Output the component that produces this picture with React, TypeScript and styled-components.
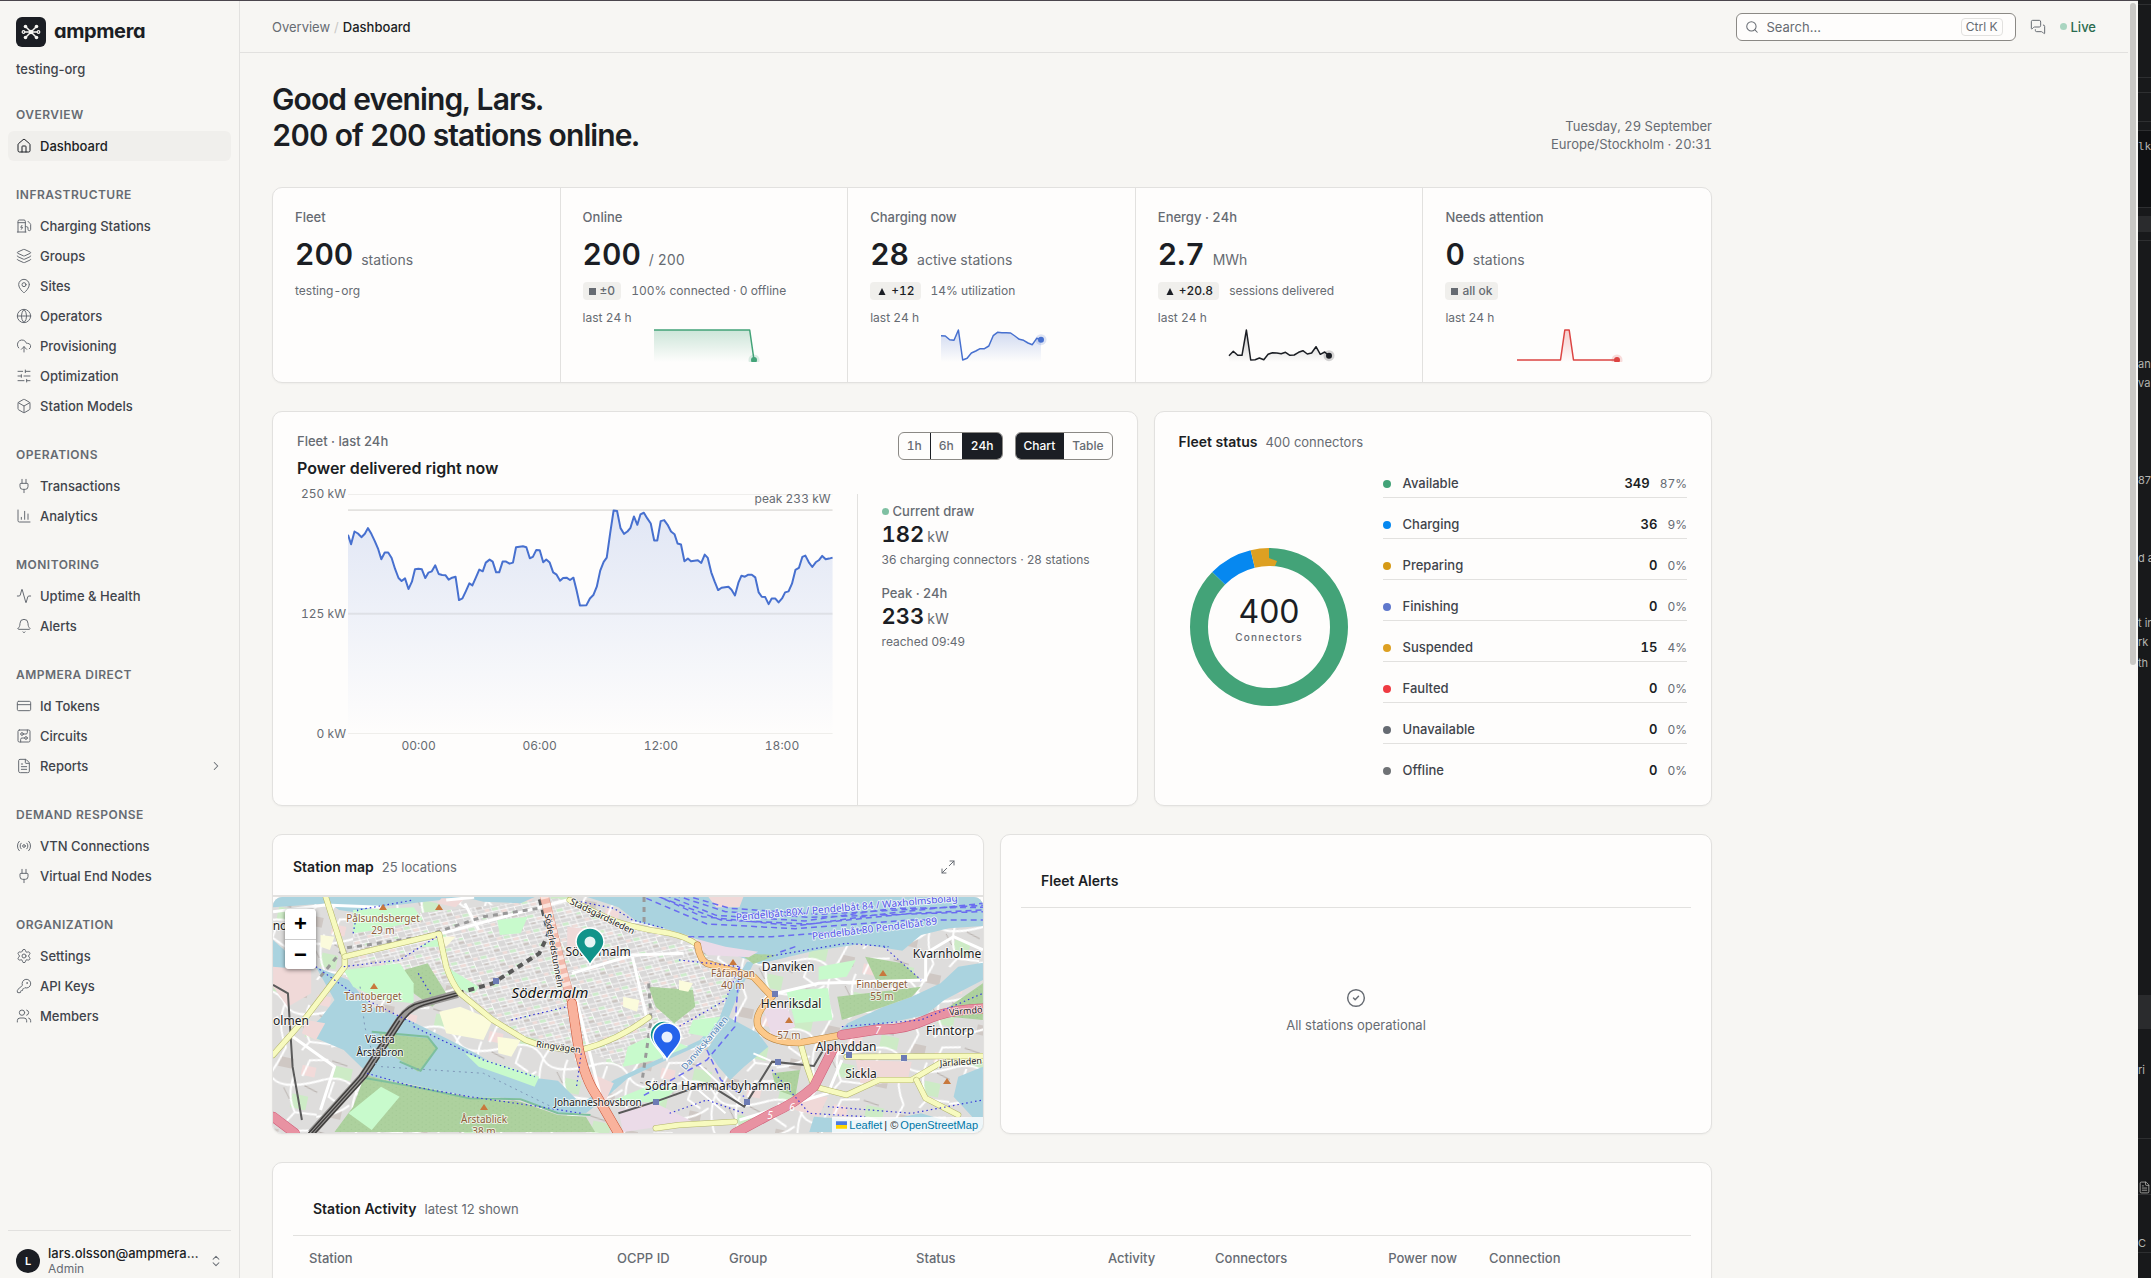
import React from "react";
import styled, { createGlobalStyle } from "styled-components";
import {
  Activity, Bell, Box, ChartColumn, ChevronRight, ChevronsUpDown, CircleCheck, CircuitBoard,
  CloudUpload, CreditCard, EvCharger, FileText, Globe, House, KeyRound, Layers, MapPin,
  Maximize2, MessagesSquare, Plug, Radio, Search, Settings, SlidersHorizontal, Users,
} from "lucide-react";

const c = {
  page: "#f7f6f3", card: "#fefdfc", line: "#e2e1df", strong: "#8b8985", soft: "#f0efec",
  ink: "#1b1e24", body: "#3f444b", muted: "#666b72",
  green: "#43a378", blue: "#4770cf", red: "#dc4442",
};

const Global = createGlobalStyle`
  *, *::before, *::after { box-sizing: border-box; }
  body { margin: 0; background: ${c.page}; overflow: hidden; }
  body, button, input { font-family: Inter, "Liberation Sans", sans-serif; }
  h1, h2, p, ul { margin: 0; padding: 0; }
  ul { list-style: none; }
  a { color: inherit; text-decoration: none; }
`;

const Desktop = styled.div`
  display: flex; height: 100vh; overflow: hidden;
  font-size: 13px; line-height: 18px; color: ${c.ink};
`;
const AppWindow = styled.div`
  flex: 1; min-width: 0; display: flex; overflow: hidden;
  background: ${c.page}; border-top: 1px solid #4b464d;
`;
const ScrollTrack = styled.div`width: 10px; padding: 2px; flex: none;`;
const ScrollThumb = styled.div`height: 52%; border-radius: 3px; background: #c9c8c5;`;

/* Sidebar */
const Sidebar = styled.aside`
  width: 240px; flex: none; display: flex; flex-direction: column;
  border-right: 1px solid ${c.line};
`;
const Brand = styled.div`display: flex; align-items: center; gap: 8px; padding: 16px 16px 0;`;
const BrandMark = styled.svg`width: 30px; height: 30px; display: block;`;
const BrandName = styled.span`
  padding-bottom: 2px; font-size: 20px; line-height: 28px; font-weight: 700; letter-spacing: -0.02em;
  font-feature-settings: "cv11";
`;
const Org = styled.p`padding: 12px 16px 2px; font-weight: 500; line-height: 20px; color: ${c.body};`;
const Nav = styled.nav`flex: 1; padding: 0 8px;`;
const GroupTitle = styled.h2`
  padding: 25px 8px 7px; font-size: 12px; line-height: 18px; font-weight: 600;
  letter-spacing: 0.04em; text-transform: uppercase; color: ${c.muted};
`;
const NavLink = styled.a<{ $active?: boolean }>`
  display: flex; align-items: center; gap: 8px; height: 30px; padding: 0 8px; border-radius: 6px;
  font-weight: 500; color: ${(p) => (p.$active ? c.ink : c.body)};
  background: ${(p) => (p.$active ? c.soft : "transparent")};
  svg { color: ${(p) => (p.$active ? c.ink : c.muted)}; }
  span { flex: 1; }
`;
const Account = styled.button`
  display: flex; align-items: center; gap: 8px; margin: 0 8px; padding: 12px 8px 0; height: 48px;
  border: 0; border-top: 1px solid ${c.line}; background: none; text-align: left; color: ${c.muted};
`;
const Avatar = styled.span`
  width: 24px; height: 24px; flex: none; border-radius: 50%; display: grid; place-items: center;
  background: ${c.ink}; color: #fff; font-size: 11px; font-weight: 600;
`;
const AccountText = styled.span`
  flex: 1; min-width: 0; font-size: 12px; line-height: 16px;
  strong { display: block; overflow: hidden; text-overflow: ellipsis; font-size: 13px; font-weight: 500; color: ${c.ink}; }
`;

/* Header */
const Main = styled.main`flex: 1; min-width: 0;`;
const TopBar = styled.header`
  display: flex; align-items: center; gap: 14px; height: 52px; padding: 0 32px;
  border-bottom: 1px solid ${c.line};
`;
const Crumbs = styled.nav`
  flex: 1; display: flex; gap: 4px; color: ${c.muted};
  strong { font-weight: 500; color: ${c.ink}; }
  i { color: #c9c8c5; font-style: normal; }
`;
const SearchBox = styled.label`
  display: flex; align-items: center; gap: 8px; width: 280px; height: 28px; padding: 0 12px 0 8px;
  border: 1px solid ${c.strong}; border-radius: 6px; background: ${c.card}; color: ${c.muted};
  input { flex: 1; min-width: 0; padding: 0; border: 0; outline: 0; background: none; font-size: 13px; }
  input::placeholder { color: ${c.muted}; opacity: 1; }
`;
const Kbd = styled.kbd`
  padding: 0 4px; border: 1px solid ${c.line}; border-radius: 4px;
  font: 400 12px/16px Inter, sans-serif;
`;
const IconButton = styled.button`
  display: grid; place-items: center; padding: 0; border: 0; background: none; color: ${c.muted};
`;
const Live = styled.span`
  display: flex; align-items: center; gap: 4px; font-weight: 500; color: #2a6b4f;
`;
const Dot = styled.i<{ $color: string; $size?: number }>`
  width: ${(p) => p.$size ?? 8}px; height: ${(p) => p.$size ?? 8}px; flex: none;
  border-radius: 50%; background: ${(p) => p.$color};
`;

/* Content */
const Content = styled.div`
  display: flex; flex-direction: column; gap: 28px; max-width: 1504px; padding: 28px 32px;
`;
const Hello = styled.div`
  display: flex; justify-content: space-between; align-items: flex-end; padding-bottom: 6px;
  font-variant-numeric: tabular-nums;
  h1 { font-size: 30px; line-height: 36px; font-weight: 600; letter-spacing: -0.03em; }
  p { text-align: right; color: ${c.muted}; }
`;
const Card = styled.section`
  min-width: 0; border: 1px solid ${c.line}; border-radius: 10px; background: ${c.card};
  box-shadow: 0 1px 2px rgba(27, 30, 36, 0.04);
`;
const Stats = styled(Card)`display: grid; grid-template-columns: repeat(5, 1fr);`;
const Stat = styled.div`
  height: 194px; padding: 20px 22px; display: flex; flex-direction: column;
  font-variant-numeric: tabular-nums;
  &:not(:last-child) { border-right: 1px solid ${c.line}; }
`;
const StatLabel = styled.div`font-weight: 500; color: ${c.muted};`;
const StatValue = styled.div`
  display: flex; align-items: baseline; gap: 8px; margin: 10px 0 4px;
  font-size: 14px; line-height: 36px; color: ${c.muted};
  strong { font-size: 30px; font-weight: 600; color: ${c.ink}; }
`;
const StatNote = styled.div`
  display: flex; align-items: center; gap: 10px; margin-bottom: 10px;
  font-size: 12px; line-height: 18px; color: ${c.muted};
`;
const Pill = styled.span<{ $strong?: boolean }>`
  display: inline-flex; align-items: center; gap: 4px; padding: 0 6px; border-radius: 4px;
  background: ${c.soft}; font-weight: 500; color: ${(p) => (p.$strong ? c.ink : c.muted)};
`;
const Mark = styled.svg<{ $w: number }>`width: ${(p) => p.$w}px; height: 7px; fill: currentColor;`;
const Since = styled.div`font-size: 12px; line-height: 16px; color: ${c.muted};`;
const Spark = styled.svg`display: block; flex: none; width: 112px; height: 34px; margin: 2px auto 0;`;

const Row = styled.div<{ $cols: string }>`
  display: grid; grid-template-columns: ${(p) => p.$cols}; gap: 16px;
`;
const CardTitle = styled.h2`
  font-size: 14px; line-height: 20px; font-weight: 600;
  small { margin-left: 8px; font-size: 13px; font-weight: 400; color: ${c.muted}; }
`;

/* Power card */
const PowerCard = styled(Card)`display: flex; flex-direction: column;`;
const PowerHead = styled.div`
  display: flex; justify-content: space-between; align-items: flex-start; padding: 20px 24px 0; height: 82px;
  p { font-weight: 500; color: ${c.muted}; }
  h2 { margin-top: 6px; font-size: 16px; line-height: 24px; font-weight: 600; }
`;
const Toggles = styled.div`display: flex; gap: 12px;`;
const Segmented = styled.div`
  display: flex; height: 28px; border: 1px solid ${c.strong}; border-radius: 6px; overflow: hidden;
`;
const Segment = styled.button<{ $on?: boolean }>`
  padding: 0 8px 1px; border: 0; font-size: 12px; font-weight: 500; font-variant-numeric: tabular-nums;
  color: ${(p) => (p.$on ? "#fff" : c.muted)}; background: ${(p) => (p.$on ? c.ink : "transparent")};
  & + & { border-left: 1px solid ${(p) => (p.$on ? c.ink : "#c4c2be")}; }
`;
const PowerBody = styled.div`flex: 1; display: grid; grid-template-columns: 1fr 280px;`;
const ChartArea = styled.div`
  display: grid; grid-template-columns: 49px 1fr; grid-template-rows: 240px 24px; column-gap: 2px;
  padding: 0 24px; font-size: 12px; line-height: 16px; color: ${c.muted};
  font-variant-numeric: tabular-nums;
`;
const YAxis = styled.div`
  display: flex; flex-direction: column; justify-content: space-between; margin: -8px 0; text-align: right;
`;
const Plot = styled.div`position: relative; min-width: 0;`;
const PlotSvg = styled.svg`
  display: block; width: 100%; height: 100%;
  * { vector-effect: non-scaling-stroke; }
`;
const PeakLabel = styled.span`position: absolute; right: 2px; top: -3px;`;
const XAxis = styled.div`
  grid-column: 2; display: grid; grid-template-columns: repeat(4, 1fr);
  margin: 0 -10px 0 10px; padding-top: 4px; text-align: center;
`;
const Readings = styled.div`border-left: 1px solid ${c.line}; padding: 8px 24px;`;
const Reading = styled.div`
  height: 82px; font-size: 12px; color: ${c.muted};
  header { display: flex; align-items: center; gap: 4px; font-size: 13px; font-weight: 500; }
  div { font-size: 14px; line-height: 28px; }
  strong { margin-right: 3px; font-size: 22px; font-weight: 600; font-variant-numeric: tabular-nums; color: ${c.ink}; }
`;

/* Status card */
const StatusCard = styled(Card)`padding: 20px 24px;`;
const StatusBody = styled.div`display: grid; grid-template-columns: 180px 1fr; align-items: center; gap: 24px; margin-top: 17px;`;
const Donut = styled.svg`display: block; width: 160px; height: 160px; margin: 0 auto;`;
const Legend = styled.ul`display: flex; flex-direction: column; gap: 12px;`;
const LegendRow = styled.li`
  display: flex; align-items: baseline; height: 29px; padding-top: 5px; gap: 10px; color: ${c.body}; font-weight: 500;
  border-bottom: 1px solid ${c.line};
  &:last-child { border-bottom-color: transparent; }
  span { flex: 1; padding-left: 2px; }
  strong { font-weight: 600; font-variant-numeric: tabular-nums; color: ${c.ink}; }
  small { font-size: 12px; font-weight: 400; font-variant-numeric: tabular-nums; color: ${c.muted}; }
`;

/* Map card */
const MapHead = styled.div`
  display: flex; justify-content: space-between; align-items: center; height: 62px; padding: 4px 27px 0 20px;
  border-bottom: 2px solid ${c.line};
`;
const MapFrame = styled.div`
  position: relative; height: 236px; overflow: hidden; border-radius: 9px; background: #dddddd;
`;
const MapSvg = styled.svg`
  display: block; width: 100%; height: 100%;
  .geo * { vector-effect: non-scaling-stroke; }
`;
const Zoom = styled.div`
  position: absolute; left: 12px; top: 12px; width: 31px; border-radius: 4px; overflow: hidden;
  box-shadow: 0 1px 4px rgba(0, 0, 0, 0.5);
  button {
    display: block; width: 100%; height: 30px; padding: 0; border: 0; background: #fff; color: #000;
    font: bold 22px/30px "Liberation Sans", sans-serif;
  }
  button + button { border-top: 1px solid #ccc; }
`;
const Attribution = styled.div`
  position: absolute; right: 0; bottom: 0; display: flex; align-items: center; gap: 2px; height: 16px; padding: 0 5px 0 4px;
  background: rgba(255, 255, 255, 0.8); color: #333; font: 11px/16px "Liberation Sans", sans-serif;
  a { color: #0078a8; }
`;

/* Alerts and activity */
const Inset = styled(Card)`display: flex; flex-direction: column; padding: 20px;`;
const InsetHead = styled.div`padding: 16px 20px; border-bottom: 1px solid ${c.line};`;
const Empty = styled.div`
  flex: 1; display: flex; flex-direction: column; align-items: center; justify-content: center; gap: 8px;
  color: ${c.muted};
`;
const Table = styled.table`
  width: 100%; table-layout: fixed; border-collapse: collapse;
  th { height: 44px; padding: 0 16px; text-align: left; font-size: 13px; font-weight: 500; color: ${c.muted}; }
  th.num { text-align: right; }
`;

/* Strip of the window behind */
const Behind = styled.div`
  width: 13px; flex: none; overflow: hidden; background: #18191b; color: #b4b4b0;
  display: flex; flex-direction: column; font-size: 11px; line-height: 18px; white-space: nowrap;
`;
const Slice = styled.div<{ $h: number; $tone?: "band" | "dark"; $rule?: boolean; $mono?: boolean }>`
  height: ${(p) => p.$h}px; flex: none; display: flex; align-items: flex-end;
  background: ${(p) => (p.$tone === "band" ? "#2a2b2d" : p.$tone === "dark" ? "#101113" : "transparent")};
  border-bottom: ${(p) => (p.$rule ? "1px solid #2e2f31" : "0")};
  font-family: ${(p) => (p.$mono ? '"DejaVu Sans Mono", monospace' : "inherit")};
`;

const nav = [
  { title: "Overview", items: [["Dashboard", House]] },
  { title: "Infrastructure", items: [["Charging Stations", EvCharger], ["Groups", Layers], ["Sites", MapPin], ["Operators", Globe], ["Provisioning", CloudUpload], ["Optimization", SlidersHorizontal], ["Station Models", Box]] },
  { title: "Operations", items: [["Transactions", Plug], ["Analytics", ChartColumn]] },
  { title: "Monitoring", items: [["Uptime & Health", Activity], ["Alerts", Bell]] },
  { title: "Ampmera Direct", items: [["Id Tokens", CreditCard], ["Circuits", CircuitBoard], ["Reports", FileText]] },
  { title: "Demand Response", items: [["VTN Connections", Radio], ["Virtual End Nodes", Plug]] },
  { title: "Organization", items: [["Settings", Settings], ["API Keys", KeyRound], ["Members", Users]] },
] as { title: string; items: [string, React.ElementType][] }[];

const flat = (n: number, v: number) => Array(n).fill(v) as number[];
const sparks = {
  online: [...flat(23, 2), 32],
  charging: [7.7, 8, 11.7, 12.3, 2, 32, 30.3, 25, 23, 20.7, 20.7, 18, 7.7, 4.3, 4.7, 4.7, 5, 8, 11.3, 12.3, 15, 16.7, 10.3, 11.7],
  energy: [27.7, 23.3, 27.3, 27.3, 2, 32, 31.7, 30, 31.7, 26.3, 24.7, 25, 25.7, 24.3, 27.3, 27, 24.3, 22.7, 26, 25, 18.7, 26.3, 24, 27.7],
  attention: [...flat(11, 32), 2, 2, ...flat(11, 32)],
};

function Sparkline({ id, data, color }: { id: string; data: number[]; color: string }) {
  const pts = data.map((y, i) => `${(6 + (i * 100) / (data.length - 1)).toFixed(1)},${y}`);
  return (
    <Spark viewBox="0 0 112 34" aria-hidden>
      <defs>
        <linearGradient id={id} x1="0" y1="0" x2="0" y2="34" gradientUnits="userSpaceOnUse">
          <stop offset="0" stopColor={color} stopOpacity="0.28" />
          <stop offset="1" stopColor={color} stopOpacity="0" />
        </linearGradient>
      </defs>
      <polygon points={`6,34 ${pts.join(" ")} 106,34`} fill={`url(#${id})`} />
      <polyline points={pts.join(" ")} fill="none" stroke={color} strokeWidth="1.5" strokeLinejoin="round" />
      <circle cx="106" cy={data[data.length - 1]} r="5.5" fill={color} opacity="0.18" />
      <circle cx="106" cy={data[data.length - 1]} r="3" fill={color} />
    </Spark>
  );
}

const Square = () => <Mark $w={7} viewBox="0 0 7 7"><rect width="7" height="7" /></Mark>;
const Up = () => <Mark $w={11} viewBox="0 0 11 7"><path d="M6 0 9.500 7h-7z" /></Mark>;

const power = "230,405 238,433 247,395 256,401 265,412 274,402 282,385 291,402 300,424 309,448 317,478 326,458 335,458 344,474 353,507 362,534 370,543 379,535 388,567 397,545 405,508 414,506 423,508 432,534 440,518 449,514 458,496 467,522 476,525 485,526 493,539 502,533 511,530 520,600 529,595 538,573 547,550 555,556 564,533 573,509 582,514 590,488 600,479 608,485 617,517 625,517 634,485 643,485 652,491 661,488 669,442 687,439 696,442 705,475 713,471 722,450 731,451 740,487 748,479 757,488 766,517 775,524 784,542 792,534 801,533 810,540 819,533 827,570 836,616 853,615 862,595 871,585 880,560 889,512 898,486 906,473 915,400 924,332 933,334 942,385 951,402 960,395 968,384 977,350 986,375 994,344 1003,339 1012,356 1021,371 1030,422 1038,422 1047,364 1056,361 1065,375 1074,395 1083,403 1091,431 1100,434 1109,484 1118,476 1126,484 1144,481 1153,489 1162,464 1170,474 1179,517 1188,545 1197,570 1206,563 1224,560 1232,569 1241,586 1250,548 1258,527 1267,530 1276,524 1285,524 1294,532 1303,577 1311,590 1320,591 1329,612 1337,595 1346,595 1355,607 1364,595 1372,577 1381,574 1390,551 1399,510 1408,504 1417,471 1425,467 1434,487 1443,501 1452,487 1460,481 1469,468 1478,478 1487,476 1496,473";

function PowerChart() {
  return (
    <PlotSvg viewBox="230 283 1266 717" preserveAspectRatio="none" role="img" aria-label="Power delivered over the last 24 hours">
      <defs>
        <linearGradient id="power" x1="0" y1="0" x2="0" y2="1">
          <stop offset="0" stopColor={c.blue} stopOpacity="0.16" />
          <stop offset="1" stopColor={c.blue} stopOpacity="0" />
        </linearGradient>
      </defs>
      <g stroke="#ecebe8" strokeWidth="1">
        <path d="M230 284H1496" /><path d="M230 641H1496" strokeWidth="2" /><path d="M230 999H1496" />
      </g>
      <polygon points={`230,1000 ${power} 1496,1000`} fill="url(#power)" />
      <path d="M230 331H1496" stroke="#cfcecb" strokeWidth="1" />
      <polyline points={power} fill="none" stroke={c.blue} strokeWidth="2" strokeLinejoin="round" />
    </PlotSvg>
  );
}

const statuses: [string, number, string, string][] = [
  ["Available", 349, "87%", c.green], ["Charging", 36, "9%", "#0688f0"], ["Preparing", 0, "0%", "#d69a16"],
  ["Finishing", 0, "0%", "#5f78cc"], ["Suspended", 15, "4%", "#dda022"], ["Faulted", 0, "0%", "#ef3b42"],
  ["Unavailable", 0, "0%", "#666b72"], ["Offline", 0, "0%", "#6f7275"],
];

function StatusDonut() {
  const ring = { cx: 80, cy: 80, r: 70, fill: "none", strokeWidth: 18, pathLength: 400, transform: "rotate(-90 80 80)" };
  return (
    <Donut viewBox="0 0 160 160" role="img" aria-label="400 connectors">
      <circle {...ring} stroke={c.green} strokeDasharray="349 400" />
      <circle {...ring} stroke="#0688f0" strokeDasharray="36 400" strokeDashoffset="-349" />
      <circle {...ring} stroke="#dda022" strokeDasharray="15 400" strokeDashoffset="-385" />
      <path d="M79 9 80 11 88 14 86 19 79 19z" fill="#dda022" />
      <text x="80" y="76" textAnchor="middle" fontSize="32" fill={c.ink}>400</text>
      <text x="80" y="94" textAnchor="middle" fontSize="10" letterSpacing="0.12em" fontWeight="500" fill={c.muted}>Connectors</text>
    </Donut>
  );
}

function Road({ d, color, edge, w }: { d: string; color: string; edge: string; w: number }) {
  return (
    <g fill="none" strokeLinejoin="round" strokeLinecap="round">
      <path d={d} stroke={edge} strokeWidth={w + 1} />
      <path d={d} stroke={color} strokeWidth={w} />
    </g>
  );
}

const yellow = [
  "M140 225 182 410 182 440 100 590 28 705", "M182 410 385 342 400 440Q412 490 430 520L500 600 570 660Q620 690 690 690 770 660 835 592",
  "M665 240 740 290Q780 318 880 340 920 352 940 375", "M1160 665 1175 740 1190 800 1260 825 1330 780 1400 780 1460 730 1553 720",
  "M1260 710 1553 708", "M850 925 900 915 1020 905", "M1410 780 1430 835 1500 885",
];
const brown = "#8f5d3a";
const labels: [string, number, number, string][] = [
  ["Pålsundsberget", 110, 25, brown], ["29 m", 110, 37, brown], ["Tantoberget", 100, 103, brown], ["33 m", 100, 115, brown],
  ["Fåfängan", 460, 80, brown], ["40 m", 460, 92, brown], ["Finnberget", 609, 91, brown], ["55 m", 609, 103, brown],
  ["57 m", 516, 142, brown], ["Årstablick", 211, 226, brown], ["38 m", 211, 238, brown],
  ["Västra", 107, 146, "#222"], ["Årstabron", 107, 159, "#222"], ["Johanneshovsbron", 325, 209, "#222"],
];
const places: [string, number, number][] = [
  ["Södermalm", 325, 59], ["Danviken", 515, 74], ["Kvarnholme", 674, 61], ["Henriksdal", 518, 111], ["Alphyddan", 573, 154],
  ["Finntorp", 677, 138], ["Sickla", 588, 181], ["Södra Hammarbyhamnen", 445, 193], ["olmen", 18, 128], ["no", 7, 33],
];

function CityMap() {
  return (
    <MapSvg viewBox="0 0 710 236" preserveAspectRatio="xMidYMid slice" role="img" aria-label="Map of Södermalm">
      <defs>
        <pattern id="streets" width="66" height="44" patternUnits="userSpaceOnUse" patternTransform="rotate(-17)">
          <rect width="66" height="44" fill="#d9d8d8" />
          <path d="M2 2h14v9H2zM40 24h10v7H40z" fill="#cdeccb" /><path d="M20 13h12v8H20zM52 2h10v8H52z" fill="#efdcd8" />
          <path d="M36 34h12v8H36zM4 26h10v5H4z" fill="#cbc4c0" />
          <path d="M0 0H66M0 12H66M0 23H50M0 33H66M17 0V33M34 0V44M50 12V44M0 0V44M25 33V44" fill="none" stroke="#fff" strokeWidth="2" />
        </pattern>
        <pattern id="lanes" width="88" height="72" patternUnits="userSpaceOnUse" patternTransform="rotate(12)">
          <path d="M8 8h18v12H8zM60 44h16v14H60z" fill="#cdebc6" /><path d="M40 10h14v10H40zM12 50h12v10H12z" fill="#cfc8c4" />
          <path d="M64 14h14v10H64z" fill="#f2dad9" />
          <path d="M0 24Q22 14 34 30T88 24M34 30Q30 52 44 72M44 0Q40 16 34 30M0 62Q20 56 30 44M58 26Q54 46 66 62L88 60M66 62 60 72M88 4 70 8 66 25M10 24 8 40 22 46" fill="none" stroke="#fff" strokeWidth="2" />
          <path d="M4 4 20 6M50 40 58 50M70 34 84 38" fill="none" stroke="#b5aeaa" strokeWidth="1" />
        </pattern>
        <pattern id="woods" width="16" height="14" patternUnits="userSpaceOnUse">
          <rect width="16" height="14" fill="#add19e" />
          <path d="M3 5q1.500-4 3 0zM11 12q1.500-4 3 0z" fill="#97c08a" />
        </pattern>
      </defs>
      <rect width="710" height="236" fill="#dedddc" />
      <rect width="710" height="236" fill="url(#lanes)" />
      <g className="geo" transform="translate(-13 -77) scale(0.4655 0.3333)">
        <path d="M200 300 640 235 940 390 1030 470 1000 600 780 740 700 690 540 640 430 500 200 430z" fill="url(#streets)" />
        <g fill="#aad3df">
          <path d="M28 225H600L560 250 480 245 440 232 350 246 250 262 200 276 170 270 150 250 28 262z" />
          <path d="M690 225 770 262 810 305 880 330 930 350 950 385 1010 400 1072 432 1190 392 1290 372 1380 392 1420 345 1480 325 1553 318V225z" />
          <path d="M1553 428 1500 440 1462 490 1400 530 1340 560 1262 610 1242 638 1340 612 1430 585 1470 540 1553 480z" />
          <path d="M1062 425 1028 520 1005 600 950 672 870 722 790 775 745 830 700 880 640 880 560 835 450 830 330 795 240 772 180 690 95 640 130 595 160 540 120 440 190 480 240 560 320 600 400 655 470 705 540 765 640 782 690 852 760 780 860 715 945 660 985 600 1010 510 1046 425z" />
          <path d="M1005 590 1070 640 1092 680 1040 740 1010 780 985 740 960 690z" />
          <path d="M28 360 60 400 52 460 28 480zM1500 770 1553 740V936H1180L1190 890 1330 905 1420 880 1480 905 1530 890 1490 830z" />
        </g>
        <g fill="url(#woods)">
          <path d="M225 765 330 800 450 835 560 845 640 885 700 890 720 936H160L200 860z" />
          <path d="M310 450 360 430 400 520 370 560 330 520z" />
          <path d="M835 500 930 510 935 560 890 610 850 560zM255 640 360 655 380 685 340 755 290 710z" />
          <path d="M1240 530 1420 500 1400 530 1340 560 1250 600zM1480 560 1553 490V600L1480 590zM1100 760 1160 750 1150 830 1110 810zM1030 400 1110 405 1060 432zM1300 410 1380 430 1420 480 1330 500z" />
        </g>
        <g fill="#c8facc">
          <path d="M180 450 300 430 330 490 330 550 260 540 200 500z" />
          <path d="M200 270 330 262 350 300 250 330 200 340zM510 300 575 290 560 340 515 345zM440 700 600 770 590 800 470 740zM400 440 470 500 460 520 410 500z" />
          <path d="M1130 510 1220 505 1230 600 1150 610zM790 680 850 640 920 680 850 720 780 740zM930 600 990 590 960 650 920 640zM1200 440 1280 420 1260 470 1200 480z" />
          <path d="M190 880 260 800 300 830 240 930zM760 840 830 800 900 800 860 850zM340 380 400 345 390 380z" />
        </g>
        <g fill="#f0d9d8">
          <path d="M28 440 110 450 110 520 60 560 28 500zM660 320 720 330 700 380 660 400zM390 235 440 235 420 262 380 250zM100 600 140 610 120 660 90 640z" />
          <path d="M1280 720 1400 725 1390 790 1290 790zM1150 830 1220 830 1200 890 1150 870zM960 225 1040 225 1030 262 980 262zM710 760 760 790 740 850 700 800z" />
        </g>
        <g fill="#fbfbdc"><path d="M385 575 430 560 500 600 480 660 400 640zM510 650 560 660 540 710 512 700zM780 530 815 540 810 575 780 560zM380 350 420 350 400 380zM130 345 160 350 150 390 130 380zM900 480 930 490 920 515 900 510z" /></g>
        <g fill="#ebdbe8"><path d="M1080 560 1130 555 1150 620 1100 650zM770 870 850 850 930 905 780 936zM920 350 1000 380 1070 395 1050 412 960 405z" /></g>
        <path d="M240 635 360 650 380 685 345 752 300 725" fill="none" stroke="#7dbf9d" strokeWidth="2" />
        <path d="M210 770 330 800 450 835 560 838 640 880 710 885" fill="none" stroke="#7dbf9d" strokeWidth="2" />
        <g fill="none" stroke="#fff" strokeWidth="3">
          <path d="M385 342 660 240" /><path d="M670 460 800 405 910 400" /><path d="M440 250 470 330" /><path d="M680 540 730 820" /><path d="M800 410 830 590" />
          <path d="M1110 520 1200 490 1430 480 1430 400 1490 350 1553 390" /><path d="M60 640 160 740 130 870" /><path d="M1250 720 1220 820 1030 900" />
          <path d="M28 275 140 255 260 262M400 240 460 232" /><path d="M940 730 1040 860M900 760 1000 880M1060 700 1110 730" strokeWidth="2" />
        </g>
        <g fill="none" stroke="#5a5a5a">
          <path d="M110 940 220 770 300 600Q320 560 350 550L425 522" strokeWidth="8" stroke="#9a9896" />
          <path d="M104 940 213 770 293 600Q315 556 350 546L425 518M118 940 229 770 307 604Q325 566 352 555L425 526M111 940 221 770 300 602" strokeWidth="1.500" stroke="#3f3d3c" />
          <path d="M425 520 500 490 600 400 620 340 600 231" strokeWidth="4" strokeDasharray="6 5" />
          <path d="M130 470 180 385 350 350 480 290 600 265M825 231 825 310M835 490 840 600 820 790" strokeWidth="3" stroke="#999" strokeDasharray="5 5" />
          <path d="M28 495 60 520 70 740 90 900M770 880 850 845 960 790 1040 860 1100 725 1190 738 1210 690" strokeWidth="2" />
        </g>
        {yellow.map((d) => <Road key={d} d={d} color="#f7fabf" edge="#b3b56a" w={5} />)}
        <Road d="M610 225 650 450 670 550" color="#f3b9ab" edge="#d99a8a" w={8} />
        <path d="M610 225 650 450 670 550" fill="none" stroke="#fbe3dc" strokeWidth="8" strokeDasharray="4 5" />
        <Road d="M670 550 685 690Q700 780 720 820L770 940" color="#f9b29c" edge="#c84e2f" w={9} />
        <Road d="M940 375Q945 420 960 430L1060 470 1100 530Q1060 580 1070 620 1090 668 1160 668L1250 645" color="#fcc98a" edge="#b9823a" w={6} />
        <Road d="M1250 645 1330 628Q1380 632 1430 600 1480 568 1560 565M1230 690 1190 800Q1150 850 1100 880L1020 940M28 890 75 940" color="#e892a2" edge="#cf5a76" w={9} />
        <g fill="none" stroke="#6a6cf0" strokeWidth="1.500" strokeDasharray="6 4">
          <path d="M850 225 950 290 1150 318 1350 280 1553 250M870 225 980 286 1170 303 1360 265 1553 262M890 225 1000 275 1180 292 1553 275M830 235 960 312 1150 326 1400 300 1553 300M910 225 1010 265 1200 283 1553 256M860 232 990 300 1180 312 1400 280 1553 270M920 350 1100 350 1300 330M1150 380 1110 400" />
          <path d="M1030 440 1020 620 960 720 820 830M960 690 990 780 1040 830" />
        </g>
        <g fill="none" stroke="#3636d8" strokeWidth="1.200" strokeDasharray="1.500 3">
          <path d="M180 440 300 420 380 350M200 340 210 270 330 240M230 760 330 800 450 830 600 860 690 880M330 620 480 720 590 770M540 600 660 560M1090 410 1260 370 1350 380M1250 620 1420 600 1553 520M690 700 680 800M880 880 960 840 1040 880M1220 860 1400 880 1553 840M670 240 760 265 800 300 870 325M340 460 370 530M1340 380 1420 480M900 420 1030 440 1000 540 900 620M120 440 200 520 330 610M1100 750 1180 880 1300 890" />
        </g>
        <path d="M215 500 225 620 250 740M260 740 480 760 640 870" fill="none" stroke="#7f98b8" strokeWidth="1" strokeDasharray="2 4" />
      </g>
      <g fill="#c8783c">
        {[[110, 7], [166, 7], [101, 86], [460, 62], [610, 73], [516, 120], [211, 207], [674, 181]].map(([x, y]) => <path key={x + "-" + y} d={`M${x} ${y}l4 6h-8z`} />)}
      </g>
      <g fill="#6d7cb5">{[[223, 84], [502, 97], [576, 158], [631, 161], [505, 165], [383, 205], [474, 205]].map(([x, y]) => <rect key={x} x={x - 3} y={y - 3} width="6" height="6" />)}</g>
      <g fontFamily='"Noto Sans", sans-serif' textAnchor="middle" stroke="#fff" strokeOpacity="0.7" strokeWidth="2" paintOrder="stroke" strokeLinejoin="round">
        {labels.map(([t, x, y, f]) => <text key={t} x={x} y={y} fill={f} fontSize="10">{t}</text>)}
        {places.map(([t, x, y]) => <text key={t} x={x} y={y} fill="#222" fontSize="12">{t}</text>)}
        <text x="277" y="101" fontSize="15" fontStyle="italic" fill="#111">Södermalm</text>
        <text fontSize="9" fill="#222" transform="translate(328 22) rotate(26)">Stadsgårdsleden</text>
        <text fontSize="9" fill="#222" transform="translate(278 54) rotate(80)">Söderledstunneln</text>
        <text fontSize="9" fill="#222" transform="translate(285 153) rotate(8)">Ringvägen</text>
        <text fontSize="9" fill="#4f7fb5" transform="translate(434 148) rotate(-50)">Danvikskanalen</text>
        <text fontSize="9" fill="#222" transform="translate(693 117) rotate(-5)">Värmdö</text>
        <text fontSize="9" fill="#222" transform="translate(688 168) rotate(-4)">Järlaleden</text>
        <text fontSize="10" fill="#5456e8" transform="translate(574 14) rotate(-5)">Pendelbåt 80X / Pendelbåt 84 / Waxholmsbolag</text>
        <text fontSize="10" fill="#5456e8" transform="translate(602 35) rotate(-7)">Pendelbåt 80 Pendelbåt 89</text>
      </g>
      <g fill="#fff" fontFamily='"Noto Sans", sans-serif' fontStyle="italic" fontSize="10" textAnchor="middle">
        <text x="605" y="137">7</text><text x="519" y="214">6</text><text x="497" y="222">5</text>
      </g>
      {[[391, 161, "#12948a"], [394, 163, "#2563eb"], [317, 68, "#12948a"]].map(([x, y, f]) => (
        <g key={`${x}-${y}`} transform={`translate(${x} ${y})`}>
          <path d="M0 0C-3-8-14-14-14-23a14 14 0 0 1 28 0C14-14 3-8 0 0z" fill={f as string} stroke="#fff" strokeWidth="1.500" />
          <circle cy="-23" r="5.500" fill="#fff" opacity="0.9" />
        </g>
      ))}
    </MapSvg>
  );
}

const columns: [string, number][] = [
  ["Station", 308], ["OCPP ID", 112], ["Group", 187], ["Status", 192], ["Activity", 107],
  ["Connectors", 110], ["Power now", 164], ["Connection", 218],
];

export default function App() {
  return (
    <Desktop>
      <Global />
      <AppWindow>
        <Sidebar>
          <Brand>
            <BrandMark viewBox="0 0 30 30">
              <rect width="30" height="30" rx="6" fill={c.ink} />
              <g stroke="#f7f6f3" strokeWidth="1.500" fill="none">
                <path d="M9.500 9.500 20.500 20.500M20.500 9.500 9.500 20.500M8 15h14" />
                <g fill="#f7f6f3" stroke="none">
                  <circle cx="9.500" cy="9.500" r="1.800" /><circle cx="20.500" cy="9.500" r="1.800" /><circle cx="9.500" cy="20.500" r="1.800" />
                  <circle cx="20.500" cy="20.500" r="1.800" /><circle cx="15" cy="15" r="2.200" />
                </g>
                <g fill={c.ink} strokeWidth="1.200"><circle cx="7.500" cy="15" r="1.300" /><circle cx="22.500" cy="15" r="1.300" /></g>
              </g>
            </BrandMark>
            <BrandName>ampmera</BrandName>
          </Brand>
          <Org>testing-org</Org>
          <Nav aria-label="Main">
            {nav.map((g) => (
              <div key={g.title}>
                <GroupTitle>{g.title}</GroupTitle>
                {g.items.map(([label, Icon]) => (
                  <NavLink key={label} href="#" $active={label === "Dashboard"}>
                    <Icon size={16} strokeWidth={1.5} />
                    <span>{label}</span>
                    {label === "Reports" && <ChevronRight size={14} strokeWidth={1.75} />}
                  </NavLink>
                ))}
              </div>
            ))}
          </Nav>
          <Account>
            <Avatar>L</Avatar>
            <AccountText><strong>lars.olsson@ampmera.com</strong>Admin</AccountText>
            <ChevronsUpDown size={14} strokeWidth={1.75} />
          </Account>
        </Sidebar>
        <Main>
          <TopBar>
            <Crumbs aria-label="Breadcrumb"><a href="#">Overview</a><i>/</i><strong>Dashboard</strong></Crumbs>
            <SearchBox>
              <Search size={14} strokeWidth={1.75} />
              <input type="text" placeholder="Search…" aria-label="Search" />
              <Kbd>Ctrl K</Kbd>
            </SearchBox>
            <IconButton aria-label="Messages"><MessagesSquare size={16} strokeWidth={1.5} /></IconButton>
            <Live><Dot $color="#a9d5c0" $size={7} />Live</Live>
          </TopBar>
          <Content>
            <Hello>
              <h1>Good evening, Lars.<br />200 of 200 stations online.</h1>
              <p>Tuesday, 29 September<br />Europe/Stockholm · 20:31</p>
            </Hello>
            <Stats>
              <Stat>
                <StatLabel>Fleet</StatLabel>
                <StatValue><strong>200</strong>stations</StatValue>
                <StatNote>testing-org</StatNote>
              </Stat>
              <Stat>
                <StatLabel>Online</StatLabel>
                <StatValue><strong>200</strong>/ 200</StatValue>
                <StatNote><Pill><Square />±0</Pill>100% connected · 0 offline</StatNote>
                <Since>last 24 h</Since>
                <Sparkline id="s1" data={sparks.online} color={c.green} />
              </Stat>
              <Stat>
                <StatLabel>Charging now</StatLabel>
                <StatValue><strong>28</strong>active stations</StatValue>
                <StatNote><Pill $strong><Up />+12</Pill>14% utilization</StatNote>
                <Since>last 24 h</Since>
                <Sparkline id="s2" data={sparks.charging} color={c.blue} />
              </Stat>
              <Stat>
                <StatLabel>Energy · 24h</StatLabel>
                <StatValue><strong>2.7</strong>MWh</StatValue>
                <StatNote><Pill $strong><Up />+20.8</Pill>sessions delivered</StatNote>
                <Since>last 24 h</Since>
                <Sparkline id="s3" data={sparks.energy} color={c.ink} />
              </Stat>
              <Stat>
                <StatLabel>Needs attention</StatLabel>
                <StatValue><strong>0</strong>stations</StatValue>
                <StatNote><Pill><Square />all ok</Pill></StatNote>
                <Since>last 24 h</Since>
                <Sparkline id="s4" data={sparks.attention} color={c.red} />
              </Stat>
            </Stats>
            <Row $cols="1.55fr 1fr">
              <PowerCard>
                <PowerHead>
                  <div><p>Fleet · last 24h</p><h2>Power delivered right now</h2></div>
                  <Toggles>
                    <Segmented><Segment>1h</Segment><Segment>6h</Segment><Segment $on>24h</Segment></Segmented>
                    <Segmented><Segment $on>Chart</Segment><Segment>Table</Segment></Segmented>
                  </Toggles>
                </PowerHead>
                <PowerBody>
                  <ChartArea>
                    <YAxis><span>250 kW</span><span>125 kW</span><span>0 kW</span></YAxis>
                    <Plot><PowerChart /><PeakLabel>peak 233 kW</PeakLabel></Plot>
                    <XAxis><span>00:00</span><span>06:00</span><span>12:00</span><span>18:00</span></XAxis>
                  </ChartArea>
                  <Readings>
                    <Reading>
                      <header><Dot $color="#7fc0a2" $size={7} />Current draw</header>
                      <div><strong>182</strong>kW</div>
                      <p>36 charging connectors · 28 stations</p>
                    </Reading>
                    <Reading>
                      <header>Peak · 24h</header>
                      <div><strong>233</strong>kW</div>
                      <p>reached 09:49</p>
                    </Reading>
                  </Readings>
                </PowerBody>
              </PowerCard>
              <StatusCard>
                <CardTitle>Fleet status<small>400 connectors</small></CardTitle>
                <StatusBody>
                  <StatusDonut />
                  <Legend>
                    {statuses.map(([name, n, pct, color]) => (
                      <LegendRow key={name}><Dot $color={color} /><span>{name}</span><strong>{n}</strong><small>{pct}</small></LegendRow>
                    ))}
                  </Legend>
                </StatusBody>
              </StatusCard>
            </Row>
            <Row $cols="1fr 1fr">
              <Card>
                <MapHead>
                  <CardTitle>Station map<small>25 locations</small></CardTitle>
                  <IconButton aria-label="Expand map"><Maximize2 size={16} strokeWidth={1.5} /></IconButton>
                </MapHead>
                <MapFrame>
                  <CityMap />
                  <Zoom><button aria-label="Zoom in">+</button><button aria-label="Zoom out">−</button></Zoom>
                  <Attribution>
                    <svg width="11" height="8" viewBox="0 0 12 8"><path fill="#4c7be1" d="M0 0h12v4H0z" /><path fill="#ffd500" d="M0 4h12v4H0z" /></svg>
                    <a href="#">Leaflet</a>| ©<a href="#">OpenStreetMap</a>
                  </Attribution>
                </MapFrame>
              </Card>
              <Inset>
                <InsetHead><CardTitle>Fleet Alerts</CardTitle></InsetHead>
                <Empty><CircleCheck size={20} strokeWidth={1.75} /><p>All stations operational</p></Empty>
              </Inset>
            </Row>
            <Inset>
              <InsetHead><CardTitle>Station Activity<small>latest 12 shown</small></CardTitle></InsetHead>
              <Table>
                <colgroup>{columns.map(([name, w]) => <col key={name} width={w} />)}</colgroup>
                <thead><tr>{columns.map(([name]) => <th key={name} scope="col" className={name === "Power now" ? "num" : undefined}>{name}</th>)}</tr></thead>
              </Table>
            </Inset>
          </Content>
        </Main>
        <ScrollTrack><ScrollThumb /></ScrollTrack>
      </AppWindow>
      <Behind>
        <Slice $h={5} $rule /><Slice $h={73} $rule /><Slice $h={15} $rule /><Slice $h={29} $rule /><Slice $h={9} $rule />
        <Slice $h={25} $tone="dark" $mono>lk</Slice><Slice $h={52} $tone="dark" $rule /><Slice $h={8} /><Slice $h={16} $tone="band" /><Slice $h={9} $rule />
        <Slice $h={132}>an</Slice><Slice $h={19}>va</Slice><Slice $h={97}>87</Slice><Slice $h={78}>d a</Slice>
        <Slice $h={65}>t in</Slice><Slice $h={19}>rk</Slice><Slice $h={21}>th</Slice>
        <Slice $h={323} /><Slice $h={34} $tone="band" /><Slice $h={50}>ri</Slice>
        <Slice $h={60} $rule />
        <Slice $h={56} $rule><FileText size={13} strokeWidth={1.5} /></Slice><Slice $h={58} $rule>C</Slice>
      </Behind>
    </Desktop>
  );
}
